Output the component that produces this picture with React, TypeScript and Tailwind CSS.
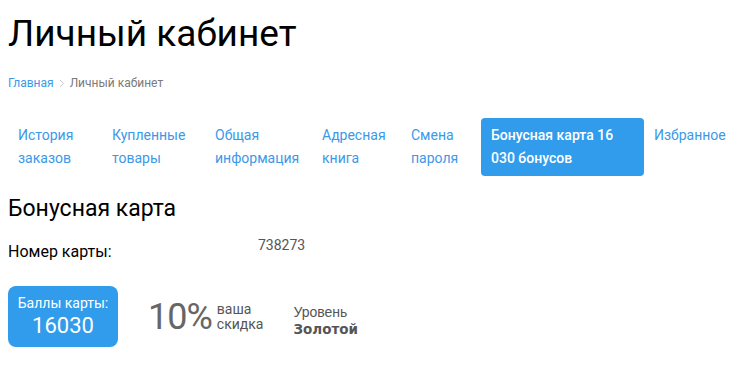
import React from "react";

const tabs = [
  { label: "История заказов", w: "w-[94px]" },
  { label: "Купленные товары", w: "w-[103px]" },
  { label: "Общая информация", w: "w-[107px]" },
  { label: "Адресная книга", w: "w-[89px]" },
  { label: "Смена пароля", w: "w-[80px]" },
];

export default function App() {
  return (
    <div className="w-[740px] h-[380px] bg-white px-[8px] font-['Roboto',sans-serif] overflow-hidden">
      <h1 className="pt-[13px] text-[37px] leading-[42px] text-black font-normal">Личный кабинет</h1>
      <div className="mt-[21px] flex items-center text-[12px] leading-[14px]">
        <span className="text-[#3b99e8]">Главная</span>
        <svg className="mx-[5px]" width="6" height="9" viewBox="0 0 6 9">
          <path d="M1 1 L4.5 4.5 L1 8" fill="none" stroke="#c8c8c8" strokeWidth="1" />
        </svg>
        <span className="text-[#7a7a7a]">Личный кабинет</span>
      </div>
      <div className="mt-[28px] flex text-[14px] leading-[23px]">
        {tabs.map((t) => (
          <div key={t.label} className={`${t.w} shrink-0 px-[10px] py-[6px] text-[#3b99e8]`}>
            {t.label}
          </div>
        ))}
        <div className="w-[163px] shrink-0 px-[10px] py-[6px] rounded-[4px] bg-[#309ceb] text-white font-medium">
          Бонусная карта 16 030 бонусов
        </div>
        <div className="shrink-0 px-[10px] py-[6px] text-[#3b99e8]">Избранное</div>
      </div>
      <h2 className="mt-[19px] text-[23px] leading-[27px] text-black font-normal">Бонусная карта</h2>
      <div className="mt-[14px] flex">
        <div className="w-[250px] pt-[6px] text-[16px] leading-[20px] text-black">Номер карты:</div>
        <div className="text-[14px] leading-[18px] text-[#555]">738273</div>
      </div>
      <div className="mt-[24px] flex items-center">
        <div className="w-[110px] h-[61px] shrink-0 rounded-[8px] bg-[#309ceb] text-white flex flex-col items-center justify-center">
          <div className="text-[14px] leading-[17px]">Баллы карты:</div>
          <div className="mt-[2px] text-[22px] leading-[24px] font-normal">16030</div>
        </div>
        <div className="ml-[30px] flex items-center">
          <span className="text-[36px] leading-[40px] text-[#666] tracking-[-1px]">10%</span>
          <div className="ml-[5px] flex flex-col text-[14px] leading-[15px] text-[#555]">
            <span>ваша</span>
            <span>скидка</span>
          </div>
        </div>
        <div className="ml-[30px] mt-[8px] flex flex-col text-[#555]">
          <span className="text-[14px] leading-[17px] font-['Liberation_Sans',sans-serif]">Уровень</span>
          <span className="text-[13.5px] leading-[16px] font-bold font-['DejaVu_Sans',sans-serif]">Золотой</span>
        </div>
      </div>
    </div>
  );
}
